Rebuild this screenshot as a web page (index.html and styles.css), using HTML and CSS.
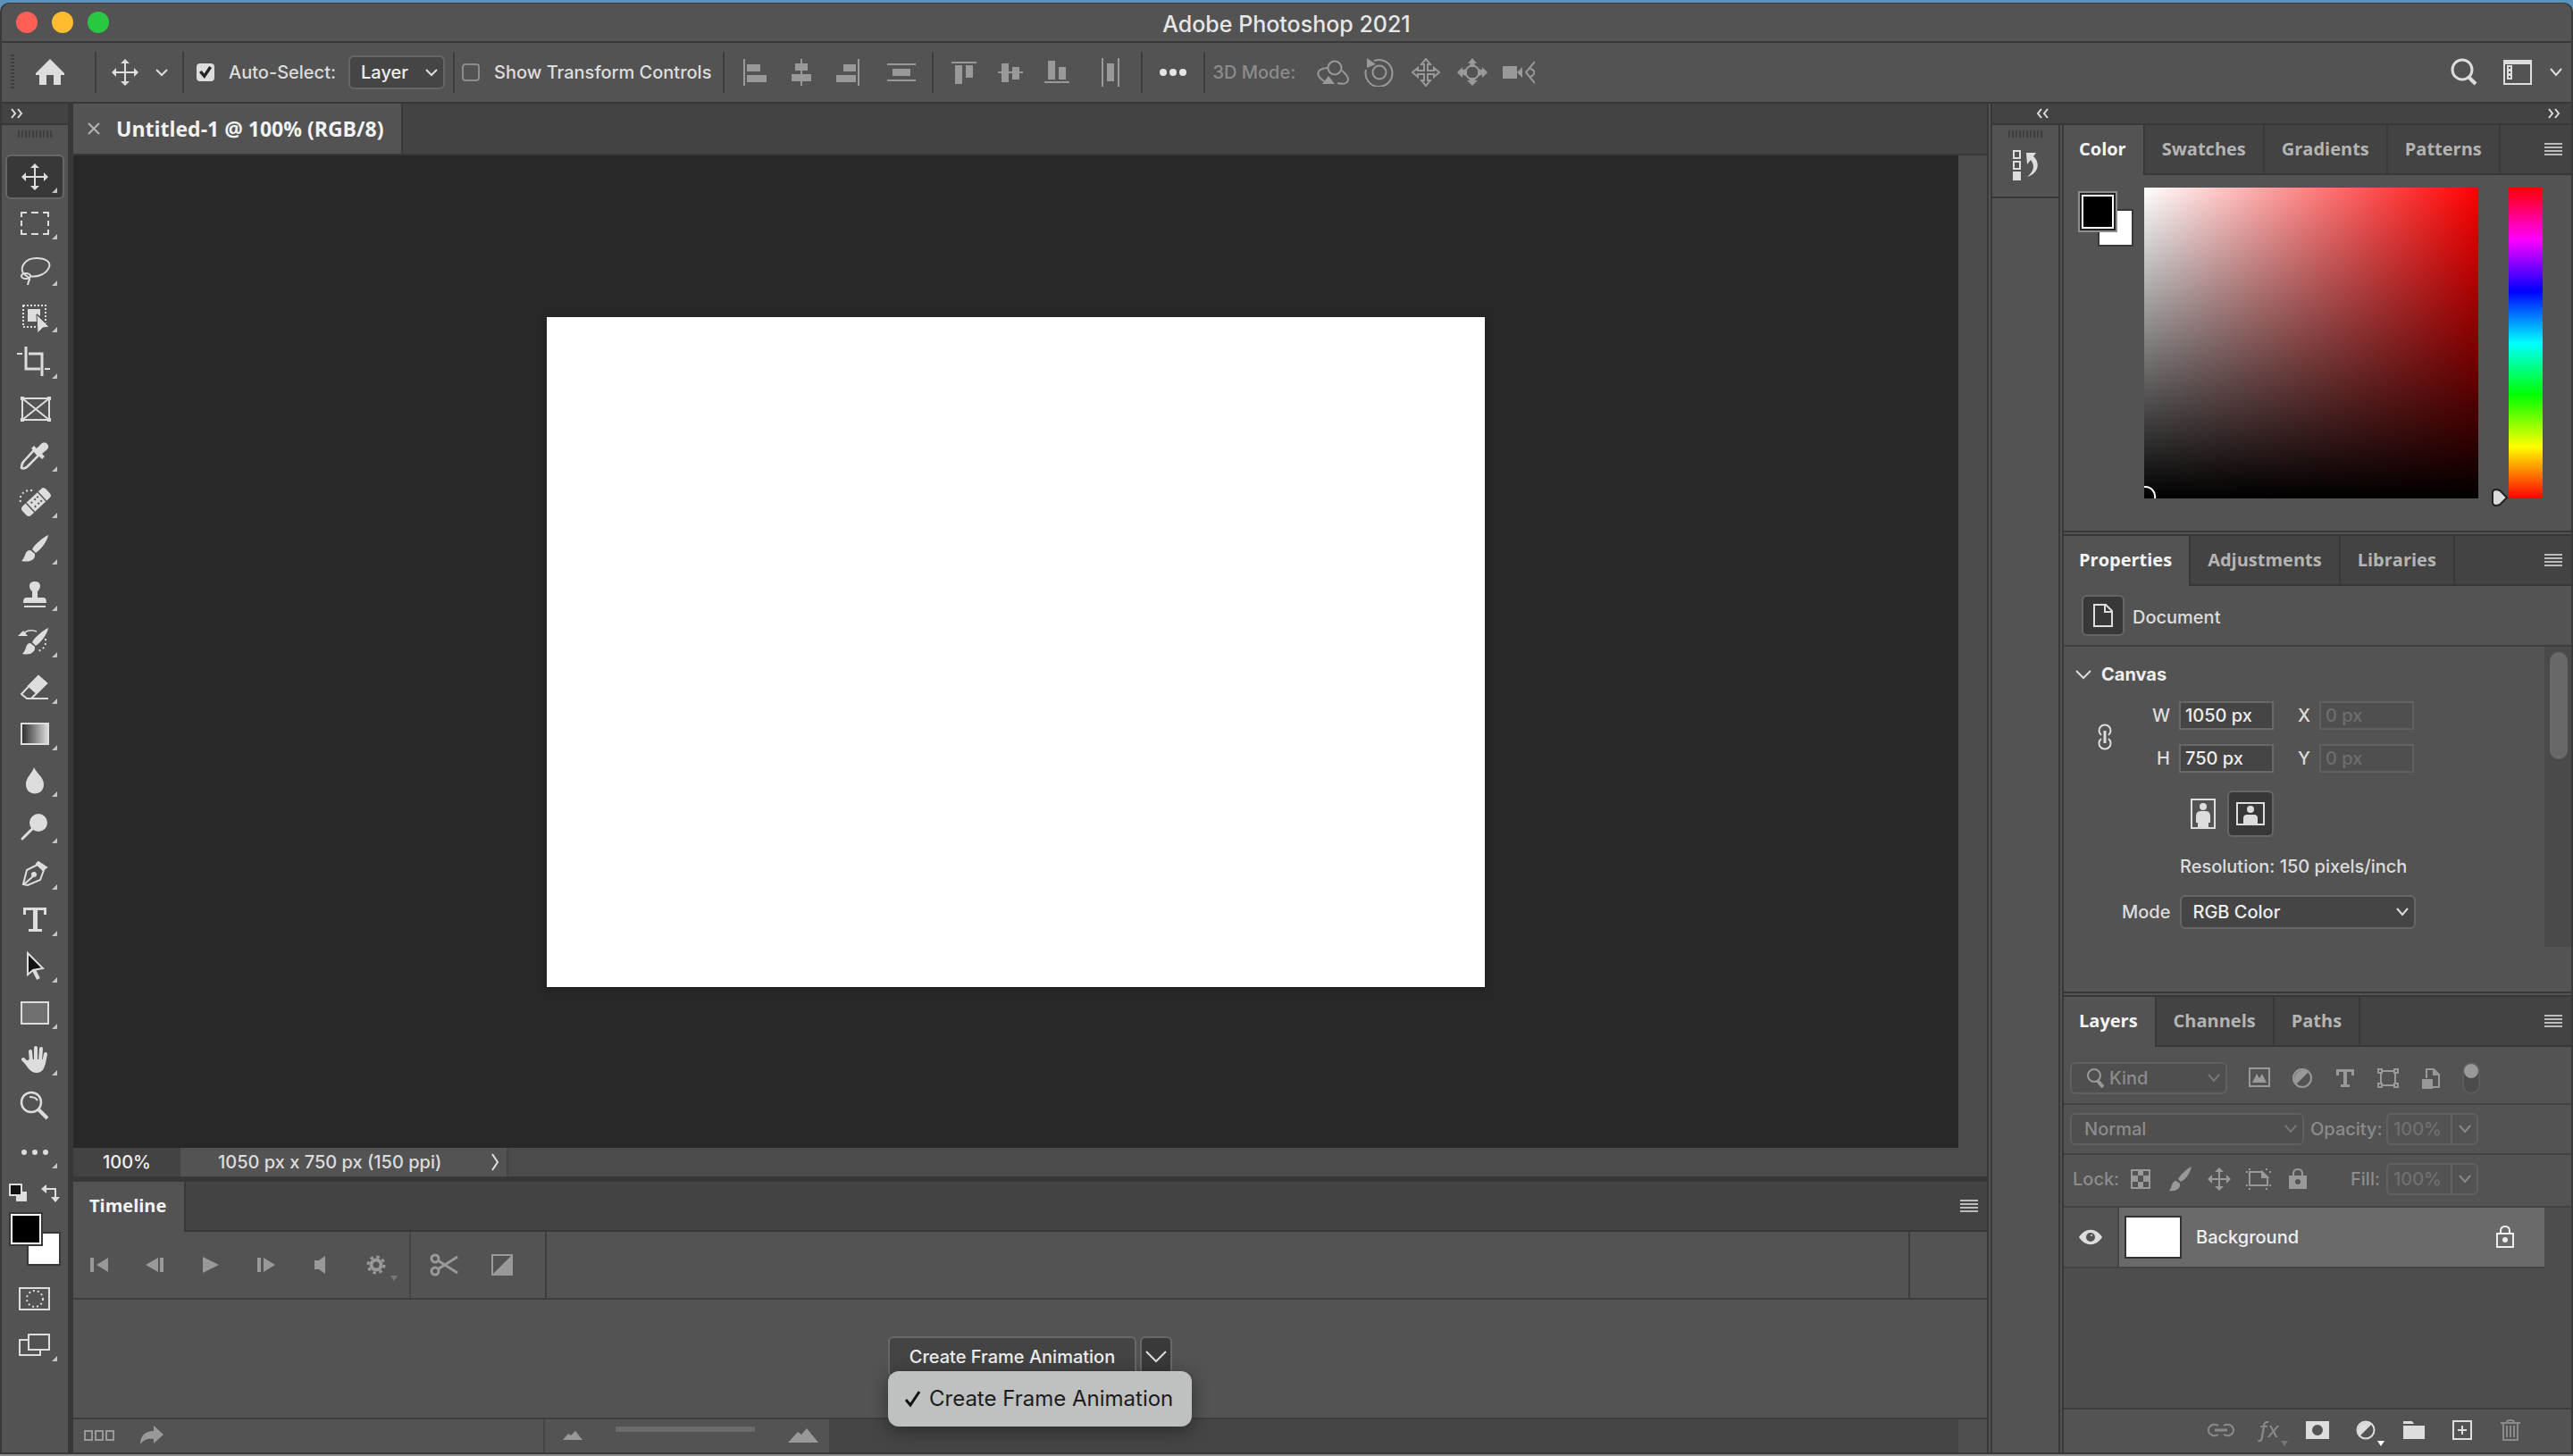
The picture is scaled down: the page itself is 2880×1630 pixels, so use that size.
FILE: index.html
```html
<!DOCTYPE html>
<html lang="en">
<head>
<meta charset="utf-8">
<title>Adobe Photoshop 2021</title>
<link rel="stylesheet" href="styles.css">
</head>
<body>
<div class="app">
  <header class="titlebar">
    <div class="lights"><button class="light red" aria-label="Close"></button><button class="light yellow" aria-label="Minimize"></button><button class="light green" aria-label="Zoom"></button></div>
    <h1 class="app-title">Adobe Photoshop 2021</h1>
  </header>

  <div class="options">
    <span class="grip-v"></span>
    <button class="home" aria-label="Home"><svg width="34" height="32" viewBox="0 0 34 32"><path d="M17 1 33 17V19H29V30H21V19H13V30H5V19H1V17Z" fill="#ddd"/></svg></button>
    <div class="seg seg-tool">
      <button aria-label="Move tool"><svg width="32" height="32" viewBox="-16 -16 32 32"><path d="M0-11V11M-11 0H11" stroke="#ddd" stroke-width="2"/><path d="M0-15 5-10H-5ZM0 15 5 10H-5ZM-15 0-10-5V5ZM15 0 10-5V5Z" fill="#ddd"/></svg></button>
      <button aria-label="Tool presets"><svg width="14" height="10" viewBox="0 0 14 10"><path d="M1 2 7 8 13 2" fill="none" stroke="#ddd" stroke-width="2"/></svg></button>
    </div>
    <div class="seg seg-auto">
      <label class="check"><input type="checkbox" checked>Auto-Select:</label>
      <span class="select select-layer"><select aria-label="Auto-select target"><option>Layer</option></select><svg width="14" height="10" viewBox="0 0 14 10"><path d="M1 2 7 8 13 2" fill="none" stroke="#ddd" stroke-width="2"/></svg></span>
    </div>
    <div class="seg seg-transform">
      <label class="check"><input type="checkbox">Show Transform Controls</label>
    </div>
    <div class="seg seg-align">
      <button aria-label="Align left edges"><svg width="32" height="32" viewBox="-16 -16 32 32"><path d="M-13-15h2v30h-2ZM-9-9H6V-1H-9ZM-9 3H13v8H-9Z" fill="#999"/></svg></button>
      <button aria-label="Align horizontal centers"><svg width="32" height="32" viewBox="-16 -16 32 32"><path d="M-1-15h2v30h-2ZM-7-10H7v8H-7ZM-11 2H11v8H-11Z" fill="#999"/></svg></button>
      <button aria-label="Align right edges"><svg width="32" height="32" viewBox="-16 -16 32 32"><path d="M11-15h2v30h-2ZM-5-9H9V-1H-5ZM-13 3H9v8H-13Z" fill="#999"/></svg></button>
      <button class="last" aria-label="Distribute vertically"><svg width="32" height="32" viewBox="-16 -16 32 32"><path d="M-16-10H16v2H-16ZM-16 8H16v2H-16ZM-10-4H10V4H-10Z" fill="#999"/></svg></button>
    </div>
    <div class="seg seg-align">
      <button aria-label="Align top edges"><svg width="32" height="32" viewBox="-16 -16 32 32"><path d="M-14-12H14v2H-14ZM-10-8H-2V13H-10ZM2-8H10V6H2Z" fill="#999"/></svg></button>
      <button aria-label="Align vertical centers"><svg width="32" height="32" viewBox="-16 -16 32 32"><path d="M-14-1H14V1H-14ZM-10-10H-2V11H-10ZM2-6H10V8H2Z" fill="#999"/></svg></button>
      <button aria-label="Align bottom edges"><svg width="32" height="32" viewBox="-16 -16 32 32"><path d="M-14 10H14v2H-14ZM-10-13H-2V8H-10ZM2-6H10V8H2Z" fill="#999"/></svg></button>
      <button class="last" aria-label="Distribute horizontally"><svg width="32" height="32" viewBox="-16 -16 32 32"><path d="M-10-16h2v32h-2ZM8-16h2v32h-2ZM-4-10H4V10H-4Z" fill="#999"/></svg></button>
    </div>
    <div class="seg seg-more"><button aria-label="More options"><svg width="32" height="10" viewBox="-16 -5 32 10" fill="#e6e6e6"><circle cx="-11" r="4"/><circle r="4"/><circle cx="11" r="4"/></svg></button></div>
    <div class="seg seg-3d">
      <span class="dim">3D Mode:</span>
      <button aria-label="Orbit"><svg width="36" height="32" viewBox="-18 -16 36 32" fill="none" stroke="#999" stroke-width="2"><circle cx="2" cy="-5" r="7.500"/><path d="M-6-5C-20-4-19 4-10 10M10-2C22 8 17 15 5 12"/><path d="M-12 13-5 4 2 13Z" fill="#999" stroke="none"/></svg></button>
      <button aria-label="Roll"><svg width="36" height="32" viewBox="-18 -16 36 32" fill="none" stroke="#999" stroke-width="2"><circle r="7.500"/><path d="M-6-13A15 15 0 1 1-15-3"/><path d="M-14-16V-5L-4-9Z" fill="#999" stroke="none"/></svg></button>
      <button aria-label="Pan"><svg width="36" height="32" viewBox="-18 -16 36 32" fill="none" stroke="#999" stroke-width="2"><path d="M0-15 5-9H2V-2H9V-5L15 0 9 5V2H2V9H5L0 15-5 9H-2V2H-9V5L-15 0-9-5V-2H-2V-9H-5Z"/></svg></button>
      <button aria-label="Slide"><svg width="36" height="32" viewBox="-18 -16 36 32" fill="none" stroke="#999" stroke-width="2"><circle r="7.500"/><path d="M0-16 5-10H2L4-6H-4L-2-10H-5ZM0 15 6 9H3L4 6H-4L-3 9H-6ZM-17 0-11-6V-3L-6-4V4L-11 3V6ZM17 0 11-6V-3L6-4V4L11 3V6Z" fill="#999" stroke="none"/></svg></button>
      <button aria-label="Camera"><svg width="36" height="32" viewBox="-18 -16 36 32" fill="none" stroke="#999" stroke-width="2"><path d="M-18-7H-2V7H-18ZM-2 0 4-6V6Z" fill="#999" stroke="none"/><path d="M18-12 8 0 18 12M13-4C19-2 19 2 13 5"/></svg></button>
    </div>
    <div class="options-end">
      <button aria-label="Search"><svg width="32" height="32" viewBox="0 0 32 32" fill="none" stroke="#ddd"><circle cx="14" cy="13" r="11" stroke-width="3"/><path d="M21 21 29 29" stroke-width="4"/></svg></button>
      <button class="ws" aria-label="Workspace"><svg width="32" height="28" viewBox="0 0 32 28"><path d="M0 0H32V28H0ZM2 5V26H30V5Z" fill="#ddd" fill-rule="evenodd"/><path d="M4 6H10V22H4ZM6 8v2h2V8ZM6 13v2h2v-2ZM6 18v2h2v-2Z" fill="#ddd" fill-rule="evenodd"/></svg></button>
      <button aria-label="Workspace menu"><svg width="14" height="10" viewBox="0 0 14 10"><path d="M1 1 7 8 13 1" fill="none" stroke="#ddd" stroke-width="2"/></svg></button>
    </div>
  </div>

  <div class="workspace">
    <nav class="tools" aria-label="Tools">
      <div class="strip"><button aria-label="Expand tools"><svg width="14" height="12" viewBox="0 0 14 12"><path d="M1 1 5 6 1 11M8 1 12 6 8 11" fill="none" stroke="#ddd" stroke-width="2"/></svg></button></div>
      <span class="grip-h"></span>
      <button class="tool active" aria-label="Move"><svg viewBox="-20 -20 40 40"><path d="M0-11V11M-11 0H11" stroke="#ddd" stroke-width="2"/><path d="M0-15 5-10H-5ZM0 15 5 10H-5ZM-15 0-10-5V5ZM15 0 10-5V5Z" fill="#ddd"/></svg></button>
      <button class="tool" aria-label="Marquee"><svg viewBox="-20 -20 40 40"><path d="M-15-7V-12H-9M-4-12H4M9-12H15V-7M15-3V3M15 7V12H9M4 12H-4M-9 12H-15V7M-15 3V-3" fill="none" stroke="#ddd" stroke-width="2"/></svg></button>
      <button class="tool" aria-label="Lasso"><svg viewBox="-20 -20 40 40" fill="none" stroke="#ddd" stroke-width="2"><path d="M-13 4C-17-3-11-13 2-13 12-13 18-9 16-3 13 5 2 9-6 7"/><ellipse cx="-10" cy="7" rx="5" ry="3"/><path d="M-12 5C-8 8-4 10-7 13L-8 17"/></svg></button>
      <button class="tool" aria-label="Object selection"><svg viewBox="-20 -20 40 40"><rect x="-13" y="-12" width="25" height="24" fill="none" stroke="#ddd" stroke-width="2" stroke-dasharray="2 2"/><path d="M-8-8H6V0L2-3V6H-8Z" fill="#ddd"/><path d="M2-2 16 12 9 13 3 19Z" fill="#ddd" stroke="#535353" stroke-width="1"/></svg></button>
      <button class="tool" aria-label="Crop"><svg viewBox="-20 -20 40 40" fill="none" stroke="#ddd" stroke-width="3"><path d="M-10-18V7H6M-7-10H8V15" /><path d="M-20-10H-14M11 7H17" stroke-width="2"/></svg></button>
      <button class="tool plain" aria-label="Frame"><svg viewBox="-20 -20 40 40"><path d="M-14-12H16V12H-14ZM-14-12 16 12M16-12-14 12" fill="none" stroke="#ddd" stroke-width="2"/><path d="M-16-14h4v4h-4ZM14-14h4v4h-4ZM-16 10h4v4h-4ZM14 10h4v4h-4Z" fill="#ddd"/></svg></button>
      <button class="tool" aria-label="Eyedropper"><svg viewBox="-20 -20 40 40"><path d="M-1-6 4 0-8 12C-11 15-13 15-15 14-15 12-15 9-12 6Z" fill="none" stroke="#ddd" stroke-width="2.500"/><path d="M-4-8-1-11 2-8 7-13C11-17 18-12 14-7L8-2 11 1 8 4Z" fill="#ddd"/></svg></button>
      <button class="tool" aria-label="Healing brush"><svg viewBox="-20 -20 40 40"><path d="M-16 0C-18-8-12-14-2-13" fill="none" stroke="#ddd" stroke-width="2" stroke-dasharray="2 3"/><g transform="rotate(-43)"><rect x="-17" y="-6" width="36" height="14" rx="4" fill="#ddd"/><path d="M-8-6V8M10-6V8" stroke="#535353" stroke-width="1.500"/><path d="M-4-3h2v2h-2ZM1-3h2v2h-2ZM5-3h2v2h-2ZM-4 3h2v2h-2ZM1 3h2v2h-2ZM5 3h2v2h-2Z" fill="#535353"/></g></svg></button>
      <button class="tool" aria-label="Brush"><svg viewBox="-20 -20 40 40" fill="#ddd"><path d="M15-15C10-13-1-4-3 1L1 5C7 1 14-8 15-15ZM-5 2C-12 2-10 10-15 14-6 16 1 13 0 6Z"/></svg></button>
      <button class="tool" aria-label="Clone stamp"><svg viewBox="-20 -20 40 40" fill="#ddd"><path d="M0-15C8-15 7-7 3-4V3H10Q13 3 13 9H-13Q-13 3-10 3H-3V-4C-7-7-8-15 0-15ZM-12 12H12v2H-12Z"/></svg></button>
      <button class="tool" aria-label="History brush"><svg viewBox="-20 -20 40 40" fill="#ddd"><path d="M15-15C10-13-1-4-3 1L1 5C7 1 14-8 15-15ZM-5 2C-11 2-9 10-14 14-5 16 1 12 0 6Z"/><path d="M-19-6-13-12-8-6Z"/><path d="M-13-8C-9-13-4-13 2-11" fill="none" stroke="#ddd" stroke-width="1.500"/><path d="M12-3C13 5 10 9 3 11" fill="none" stroke="#ddd" stroke-width="2" stroke-dasharray="2 3"/></svg></button>
      <button class="tool" aria-label="Eraser"><svg viewBox="-20 -20 40 40" fill="none" stroke="#ddd" stroke-width="2"><path d="M4-13 13-5-4 12H-9L-15 7Z"/><path d="M4-13 13-5 2 6-7-2Z" fill="#ddd"/><path d="M-8 12H15"/></svg></button>
      <button class="tool" aria-label="Gradient"><svg viewBox="-20 -20 40 40"><defs><linearGradient id="grad"><stop stop-color="#2b2b2b"/><stop offset="1" stop-color="#ddd"/></linearGradient></defs><rect x="-15" y="-12" width="30" height="23" fill="url(#grad)" stroke="#ddd" stroke-width="2"/></svg></button>
      <button class="tool" aria-label="Blur"><svg viewBox="-20 -20 40 40"><path d="M-1-15C2-8 10-4 10 4 10 18-10 18-10 4-10-4-3-8-1-15Z" fill="#ddd"/></svg></button>
      <button class="tool" aria-label="Dodge"><svg viewBox="-20 -20 40 40"><circle cx="4" cy="-5" r="10" fill="#ddd"/><path d="M-3 2-14 13" stroke="#ddd" stroke-width="3" stroke-linecap="round"/></svg></button>
      <button class="tool" aria-label="Pen"><svg viewBox="-20 -20 40 40" fill="none" stroke="#ddd" stroke-width="2"><path d="M-13 12-9-4 3-10 10-4 6 7-8 13ZM-12 12-2 3"/><circle cx="-1" cy="1" r="2" fill="#ddd"/><path d="M4-13 13-7 9-4 2-11Z" fill="#ddd"/></svg></button>
      <button class="tool" aria-label="Type"><svg viewBox="-20 -20 40 40"><path d="M-13-14H13V-6H10V-11H3V10H8V13H-7V10H-2V-11H-10V-6H-13Z" fill="#ddd"/></svg></button>
      <button class="tool" aria-label="Path selection"><svg viewBox="-20 -20 40 40"><path d="M-8-15V9L-2 4 9 2Z" fill="#111" stroke="#ddd" stroke-width="2"/><path d="M-1 4 4 14" stroke="#ddd" stroke-width="4"/></svg></button>
      <button class="tool" aria-label="Rectangle"><svg viewBox="-20 -20 40 40"><rect x="-15" y="-12" width="30" height="24" fill="#707070" stroke="#ddd" stroke-width="2"/></svg></button>
      <button class="tool" aria-label="Hand"><svg viewBox="-20 -20 40 40"><g stroke="#ddd" stroke-width="4" stroke-linecap="round"><path d="M-4 2-5-9M1 1V-13M6 2 7-12M10 4 12-6M-13 0-5 8"/></g><path d="M-6 0H12C12 10 8 15 2 15-5 15-8 9-12 3Z" fill="#ddd"/></svg></button>
      <button class="tool plain" aria-label="Zoom"><svg viewBox="-20 -20 40 40" fill="none" stroke="#ddd"><circle cx="-4" cy="-4" r="11" stroke-width="2.500"/><path d="M4 4 14 14" stroke-width="4"/><path d="M-6-10Q1-10 3-6" stroke-width="2"/></svg></button>
      <button class="tool" aria-label="Edit toolbar"><svg viewBox="-20 -20 40 40" fill="#ddd"><circle cx="-12" r="3"/><circle r="3"/><circle cx="12" r="3"/></svg></button>
      <div class="color-mini">
        <button aria-label="Default colors"><svg width="22" height="22" viewBox="0 0 22 22"><path d="M8 9H20V20H8Z" fill="#ddd"/><rect x="1" y="1" width="13" height="12" fill="#111" stroke="#ddd" stroke-width="2"/></svg></button>
        <button aria-label="Swap colors"><svg width="22" height="22" viewBox="0 0 22 22"><path d="M0 6 6 1V11ZM11 15H21L16 21Z" fill="#ddd"/><path d="M5 6H16V16" fill="none" stroke="#ddd" stroke-width="2"/></svg></button>
      </div>
      <div class="swatches"><button class="sw back" aria-label="Background color"></button><button class="sw fore" aria-label="Foreground color"></button></div>
      <button class="tool plain" aria-label="Quick mask"><svg viewBox="-20 -20 40 40" fill="none" stroke="#ddd" stroke-width="2"><rect x="-17" y="-12" width="33" height="24"/><circle r="9" stroke-dasharray="2 3"/></svg></button>
      <button class="tool" aria-label="Screen mode"><svg viewBox="-20 -20 40 40" fill="#535353" stroke="#ddd" stroke-width="2"><rect x="-17" y="-6" width="23" height="17"/><rect x="-7" y="-12" width="23" height="17"/></svg></button>
    </nav>

    <main class="center">
      <div class="doc-tabs"><div class="doc-tab"><button aria-label="Close document"><svg width="14" height="14" viewBox="0 0 14 14"><path d="M1 1 13 13M13 1 1 13" stroke="#b4b4b4" stroke-width="2"/></svg></button><span>Untitled-1 @ 100% (RGB/8)</span></div></div>
      <div class="doc-view"><div class="stage"><div class="canvas"></div></div><div class="vscroll"></div></div>
      <div class="status"><span class="zoom">100%</span><span class="info">1050 px x 750 px (150 ppi)<button aria-label="Status menu"><svg width="10" height="20" viewBox="0 0 10 20"><path d="M2 1 8 10 2 19" fill="none" stroke="#e0e0e0" stroke-width="2"/></svg></button></span></div>
      <section class="timeline">
        <div class="tabs"><button class="tab on">Timeline</button><button class="menu" aria-label="Panel menu"><i></i></button></div>
        <div class="tl-controls">
          <div class="tl-play">
            <button aria-label="First frame"><svg width="24" height="20" viewBox="-12 -10 24 20"><path d="M-10-8h4V8h-4ZM10-8V8L-3 0Z" fill="#999"/></svg></button>
            <button aria-label="Previous frame"><svg width="24" height="20" viewBox="-12 -10 24 20"><path d="M10-8H6V8h4ZM4-8V8L-10 0Z" fill="#999"/></svg></button>
            <button aria-label="Play"><svg width="24" height="20" viewBox="-12 -10 24 20"><path d="M-8-9 10 0-8 9Z" fill="#999"/></svg></button>
            <button aria-label="Next frame"><svg width="24" height="20" viewBox="-12 -10 24 20"><path d="M-9-8h4V8h-4ZM-2-8V8L11 0Z" fill="#999"/></svg></button>
            <button aria-label="Audio"><svg width="24" height="20" viewBox="-12 -10 24 20"><path d="M-7-5H-2L5-10V10L-2 5H-7Z" fill="#999"/></svg></button>
            <button class="gear" aria-label="Playback options"><svg width="24" height="24" viewBox="-12 -12 24 24" fill="none" stroke="#999"><circle r="5.500" stroke-width="4"/><circle r="9" stroke-width="3" stroke-dasharray="3.500 3.568"/></svg></button>
          </div>
          <div class="tl-edit">
            <button aria-label="Split at playhead"><svg width="32" height="26" viewBox="-16 -13 32 26" fill="none" stroke="#999" stroke-width="3"><circle cx="-10" cy="-7" r="4"/><circle cx="-10" cy="7" r="4"/><path d="M-7-5 15 9M-7 5 15-9"/></svg></button>
            <button aria-label="Transition"><svg width="26" height="26" viewBox="-13 -13 26 26"><rect x="-11" y="-11" width="22" height="22" fill="none" stroke="#999" stroke-width="2"/><path d="M12-12V12H-12Z" fill="#999"/></svg></button>
          </div>
          <div class="tl-ruler"></div>
          <div class="tl-pad"></div>
        </div>
        <div class="tl-body">
          <div class="create">
            <button class="create-main">Create Frame Animation</button><button class="create-more" aria-label="Choose animation type"><svg width="26" height="16" viewBox="0 0 26 16"><path d="M2 2 13 13 24 2" fill="none" stroke="#ddd" stroke-width="2"/></svg></button>
            <ul class="popup" role="menu"><li role="menuitem"><svg width="20" height="20" viewBox="0 0 20 20"><path d="M2 11 7 17 17 2" fill="none" stroke="#111" stroke-width="3"/></svg>Create Frame Animation</li></ul>
          </div>
        </div>
        <div class="tl-foot">
          <div class="foot-left">
            <button aria-label="Convert to frames"><svg width="34" height="14" viewBox="0 0 34 14" fill="none" stroke="#999" stroke-width="2"><path d="M1 2H9V12H1ZM13 2H21V12H13ZM25 2H33V12H25Z"/></svg></button>
            <button aria-label="Render video"><svg width="28" height="22" viewBox="0 0 28 22"><path d="M16 0 27 10 16 20V15C8 14 4 17 1 21 1 11 7 6 16 6Z" fill="#999"/></svg></button>
          </div>
          <div class="foot-zoom">
            <svg width="22" height="10" viewBox="0 0 22 10"><path d="M0 10 6 3 9 5 14 0 22 10Z" fill="#999"/></svg>
            <span class="slider"></span>
            <svg width="34" height="16" viewBox="0 0 34 16"><path d="M0 16 11 4 15 7 21 0 34 16Z" fill="#999"/></svg>
          </div>
          <div class="foot-scroll"></div>
        </div>
      </section>
    </main>

    <aside class="dock">
      <div class="strip strip-dock"><button aria-label="Expand panels"><svg width="14" height="12" viewBox="0 0 14 12"><path d="M6 1 2 6 6 11M13 1 9 6 13 11" fill="none" stroke="#ddd" stroke-width="2"/></svg></button><button aria-label="Collapse panels"><svg width="14" height="12" viewBox="0 0 14 12"><path d="M1 1 5 6 1 11M8 1 12 6 8 11" fill="none" stroke="#ddd" stroke-width="2"/></svg></button></div>
      <div class="dock-body">
      <div class="iconcol">
        <div class="icongroup"><span class="grip-h"></span><button aria-label="History"><svg width="30" height="36" viewBox="0 0 30 36"><path d="M2 2H9V10H2ZM2 14H9V22H2Z" fill="none" stroke="#ddd" stroke-width="2"/><path d="M1 25H10V35H1ZM16 4H27L24 8C32 15 30 27 17 31 26 24 25 17 21 12L17 17Z" fill="#ddd"/></svg></button></div>
      </div>
      <div class="panels">
        <section class="panel color">
          <div class="tabs"><button class="tab on">Color</button><button class="tab">Swatches</button><button class="tab">Gradients</button><button class="tab">Patterns</button><button class="menu" aria-label="Panel menu"><i></i></button></div>
          <div class="color-body">
            <div class="picks"><button class="pick white" aria-label="Background color"></button><button class="pick black" aria-label="Foreground color"></button></div>
            <div class="field"><svg width="16" height="16" viewBox="0 0 16 16"><path d="M0 3A11 11 0 0 1 12 16" fill="none" stroke="#fff" stroke-width="2"/></svg></div>
            <div class="hue"><svg width="20" height="22" viewBox="0 0 20 22"><path d="M6 2Q2 2 2 6V16Q2 20 6 20L10 19 18 11 10 3Z" fill="#ddd" stroke="#222" stroke-width="2"/></svg></div>
          </div>
        </section>
        <section class="panel props">
          <div class="tabs"><button class="tab on">Properties</button><button class="tab">Adjustments</button><button class="tab">Libraries</button><button class="menu" aria-label="Panel menu"><i></i></button></div>
          <div class="doc-row"><span class="doc-icon"><svg width="24" height="28" viewBox="0 0 24 28"><path d="M2 2H15L22 9V26H2ZM14 2V10H22" fill="none" stroke="#ddd" stroke-width="2"/></svg></span><span class="doc-name">Document</span></div>
          <div class="props-body">
            <div class="props-main">
              <h2><svg width="18" height="12" viewBox="0 0 18 12"><path d="M1 2 9 10 17 2" fill="none" stroke="#ddd" stroke-width="2"/></svg>Canvas</h2>
              <div class="dims">
                <button class="chain" aria-label="Link dimensions"><svg width="18" height="30" viewBox="0 0 18 30" fill="none" stroke="#ddd" stroke-width="2"><path d="M5 13A6.500 6.500 0 1 1 13 13M5 17A6.500 6.500 0 1 0 13 17"/><path d="M9 8V22" stroke-width="3"/></svg></button>
                <label for="w">W</label><input id="w" value="1050 px"><label for="x">X</label><input id="x" value="0 px" disabled>
                <label for="h">H</label><input id="h" value="750 px"><label for="y">Y</label><input id="y" value="0 px" disabled>
              </div>
              <div class="orient">
                <button aria-label="Portrait"><svg width="28" height="34" viewBox="0 0 28 34"><rect x="1" y="1" width="26" height="32" fill="none" stroke="#ddd" stroke-width="2"/><circle cx="14" cy="9" r="4" fill="#ddd"/><path d="M6 20Q6 14 11 14H17Q22 14 22 20V27H20V33H8V27H6Z" fill="#ddd"/></svg></button>
                <button class="sel" aria-label="Landscape"><svg width="32" height="26" viewBox="0 0 32 26"><rect x="1" y="1" width="30" height="24" fill="none" stroke="#ddd" stroke-width="2"/><circle cx="16" cy="8" r="4" fill="#ddd"/><path d="M8 25V18Q8 14 12 14H20Q24 14 24 18V25Z" fill="#ddd"/></svg></button>
              </div>
              <p class="res">Resolution: 150 pixels/inch</p>
              <div class="mode"><label for="mode">Mode</label><span class="select"><select id="mode"><option>RGB Color</option></select><svg width="14" height="10" viewBox="0 0 14 10"><path d="M1 1 7 8 13 1" fill="none" stroke="#ddd" stroke-width="2"/></svg></span></div>
            </div>
            <div class="pscroll"><span></span></div>
          </div>
        </section>
        <section class="panel layers">
          <div class="tabs"><button class="tab on">Layers</button><button class="tab">Channels</button><button class="tab">Paths</button><button class="menu" aria-label="Panel menu"><i></i></button></div>
          <div class="lrow filter">
            <span class="select off kind"><svg class="lead" width="22" height="24" viewBox="0 0 22 24" fill="none" stroke="#999"><circle cx="9" cy="9" r="7" stroke-width="2"/><path d="M13 15 19 22" stroke-width="4"/></svg><select disabled aria-label="Filter kind"><option>Kind</option></select><svg width="14" height="10" viewBox="0 0 14 10"><path d="M1 1 7 8 13 1" fill="none" stroke="#777" stroke-width="2"/></svg></span>
            <div class="ficons">
            <svg width="24" height="22" viewBox="0 0 24 22"><rect x="1" y="1" width="22" height="20" fill="none" stroke="#999" stroke-width="2"/><path d="M4 17 9 7 12 12 15 7 20 17Z" fill="#999"/></svg>
            <svg width="24" height="24" viewBox="0 0 24 24"><circle cx="12" cy="12" r="10" fill="#535353" stroke="#999" stroke-width="2"/><path d="M19 5A10 10 0 0 0 5 19Z" fill="#999"/></svg>
            <svg width="24" height="24" viewBox="0 0 24 24"><path d="M2 2H22V9H19V5H14V19H17V22H7V19H10V5H5V9H2Z" fill="#999"/></svg>
            <svg width="24" height="24" viewBox="0 0 24 24" fill="none" stroke="#999" stroke-width="2"><path d="M5 4H19M5 20H19M4 6V18M20 6V18"/><path d="M1 2H5V6H1ZM19 2H23V6H19ZM1 18H5V22H1ZM19 18H23V22H19Z" fill="#535353"/></svg>
            <svg width="24" height="24" viewBox="0 0 24 24"><path d="M7 12V2H15L21 8V22H14" fill="none" stroke="#999" stroke-width="2"/><path d="M2 13H14V24H2ZM14 2V9H21Z" fill="#999"/></svg>
            </div>
            <button class="toggle" aria-label="Toggle filtering"><i></i></button>
          </div>
          <div class="lrow blend">
            <span class="select off"><select disabled aria-label="Blend mode"><option>Normal</option></select><svg width="14" height="10" viewBox="0 0 14 10"><path d="M1 1 7 8 13 1" fill="none" stroke="#777" stroke-width="2"/></svg></span>
            <label class="dim" for="op">Opacity:</label>
            <span class="combo"><input id="op" value="100%" disabled><button aria-label="Opacity slider"><svg width="14" height="10" viewBox="0 0 14 10"><path d="M1 1 7 8 13 1" fill="none" stroke="#888" stroke-width="2"/></svg></button></span>
          </div>
          <div class="lrow lock">
            <span class="dim">Lock:</span>
            <div class="lock-icons">
              <svg width="28" height="28" viewBox="-14 -14 28 28"><path d="M-11-11H11V11H-11ZM-9-9V-4H-3V-9ZM3-9V-4H9V-9ZM-3-4V3H3V-4ZM-9 3V9H-3V3ZM3 3V9H9V3Z" fill="#999" fill-rule="evenodd"/></svg>
              <svg width="28" height="28" viewBox="-14 -14 28 28" fill="#999"><path d="M13-14C8-12 0-4-2 0L1 3C7 0 12-8 13-14ZM-4 2C-10 2-8 9-12 13-5 14 1 11 0 5Z"/></svg>
              <svg width="28" height="28" viewBox="-14 -14 28 28" fill="#999"><path d="M0-13 5-8H1V-1H8V-5L13 0 8 5V1H1V8H5L0 13-5 8H-1V1H-8V5L-13 0-8-5V-1H-1V-8H-5Z"/></svg>
              <svg width="28" height="28" viewBox="-14 -14 28 28" fill="none" stroke="#999" stroke-width="2"><path d="M-10-8H4L10-2V7H-10Z"/><path d="M4-8V-2H10Z" fill="#999"/><path d="M-14-8h2M-10-12v2M9-12v2M12-8h2M-14 7h2M12 7h2M-10 10v2M9 10v2"/></svg>
              <svg width="28" height="28" viewBox="-14 -14 28 28"><path d="M-10-4H10V11H-10Z" fill="#999"/><path d="M-5-3V-6Q-5-11 0-11T5-6V-3" fill="none" stroke="#999" stroke-width="2"/><circle cy="3" r="3" fill="#535353"/></svg>
            </div>
            <label class="dim" for="fill">Fill:</label>
            <span class="combo"><input id="fill" value="100%" disabled><button aria-label="Fill slider"><svg width="14" height="10" viewBox="0 0 14 10"><path d="M1 1 7 8 13 1" fill="none" stroke="#888" stroke-width="2"/></svg></button></span>
          </div>
          <div class="list">
            <div class="layer">
              <button class="eye" aria-label="Visibility"><svg width="26" height="18" viewBox="0 0 26 18"><path d="M0 9C7-2 19-2 26 9 19 20 7 20 0 9Z" fill="#ddd"/><circle cx="13" cy="9" r="5" fill="#535353"/><circle cx="14" cy="7" r="1" fill="#ddd"/></svg></button>
              <div class="layer-main"><span class="thumb"></span><span class="lname">Background</span><svg width="22" height="26" viewBox="0 0 22 26"><path d="M2 9H20V24H2Z" fill="none" stroke="#eee" stroke-width="2"/><path d="M6 9V6Q6 1 11 1T16 6V9" fill="none" stroke="#eee" stroke-width="2"/><circle cx="11" cy="16" r="3" fill="#eee"/></svg></div>
            </div>
          </div>
          <div class="lfoot">
            <button aria-label="Link layers"><svg width="30" height="24" viewBox="-15 -12 30 24" fill="none" stroke="#8a8a8a" stroke-width="2"><path d="M-3-5C-8-8-14-5-14 0S-8 8-3 5M3-5C8-8 14-5 14 0S8 8 3 5"/><path d="M-7 0H7" stroke-width="3"/></svg></button>
            <button class="fx" aria-label="Layer style">fx</button>
            <button aria-label="Add mask"><svg width="30" height="24" viewBox="-15 -12 30 24"><path d="M-13-10H13V10H-13ZM0-6A6 6 0 0 0 0 6 6 6 0 0 0 0-6Z" fill="#ddd" fill-rule="evenodd"/></svg></button>
            <button class="more" aria-label="Adjustment layer"><svg width="30" height="24" viewBox="-15 -12 30 24"><circle r="9.500" fill="none" stroke="#ddd" stroke-width="2"/><path d="M7-7A10 10 0 0 0-7 7Z" fill="#ddd"/></svg></button>
            <button aria-label="New group"><svg width="30" height="24" viewBox="-15 -12 30 24"><path d="M-12-10H-2L0-7H-12ZM-12-5H12V10H-12Z" fill="#ddd"/></svg></button>
            <button aria-label="New layer"><svg width="30" height="24" viewBox="-15 -12 30 24" fill="none" stroke="#ddd" stroke-width="2"><rect x="-10" y="-10" width="20" height="20"/><path d="M0-5V5M-5 0H5"/></svg></button>
            <button aria-label="Delete layer"><svg width="30" height="24" viewBox="-15 -12 30 24" fill="none" stroke="#8a8a8a" stroke-width="2"><path d="M-11-8H11M-8-8V11H8V-8M-4-9Q-4-11 0-11T4-9M-4-5V8M0-5V8M4-5V8"/></svg></button>
          </div>
        </section>
      </div>
      </div>
    </aside>
  </div>
</div>
</body>
</html>
```
FILE: styles.css
```css
*{box-sizing:border-box}
body{margin:0;background:linear-gradient(#5b93bb 0 50%,#8e8c8c 50%);font:500 20px/24px Inter,"Liberation Sans",sans-serif;color:#ddd}
button{margin:0;padding:0;border:0;background:none;color:inherit;font:inherit;display:flex;align-items:center;justify-content:center}
svg{display:block;flex:none}
h1,h2,p,ul{margin:0;padding:0;list-style:none}
input,select{font:inherit;color:inherit;margin:0}
.app{height:calc(100vh - 5px);margin:3px 0 2px;border:2px solid #383838;border-top-width:1px;border-radius:10px 10px 0 0;background:#535353;display:flex;flex-direction:column;overflow:hidden}

.titlebar{height:42px;display:grid;grid-template-columns:1fr auto 1fr;align-items:center;flex:none}
.lights{display:flex;gap:16px;padding-left:16px}
.light{width:24px;height:24px;border-radius:50%}
.red{background:#ff5f57}
.yellow{background:#febc2e}
.green{background:#28c840}
.app-title{font-size:25px;line-height:32px;font-weight:500;color:#e6e6e6;grid-column:2;padding-top:4px}

.options{height:70px;border:solid #383838;border-width:2px 0;display:flex;align-items:center;padding-left:10px;flex:none}
.grip-v{width:4px;height:40px;background:repeating-linear-gradient(#3e3e3e 0 2px,transparent 2px 4px)}
.home{width:80px}
.seg{height:46px;border-left:2px solid #3d3d3d;display:flex;align-items:center}
.seg-tool{margin-left:10px;padding:0 16px;gap:18px}
.check{display:flex;align-items:center;gap:16px}
.check input{appearance:none;width:20px;height:20px;border:2px solid #8c8c8c;border-radius:4px;display:grid;place-items:center}
.check input:checked{background:#ddd;border-color:#ddd}
.check input:checked::before{content:"";width:14px;height:14px;background:#222;clip-path:polygon(0 50%,18% 36%,40% 60%,80% 0,100% 14%,42% 100%)}
.seg-auto{padding:0 9px 0 14px;gap:14px}
.seg-transform{padding:0 13px 0 8px}
.select{position:relative;display:flex;align-items:center}
.select select{appearance:none;width:100%;height:38px;border:2px solid #666;border-radius:6px;background:#454545;padding:0 12px;color:#eee;opacity:1}
.select svg{position:absolute;right:8px;pointer-events:none}
.select-layer{width:108px}
.seg-align{padding:0 18px;gap:20px}
.seg-align .last{margin-left:8px}
.seg-more{width:70px;justify-content:center}
.seg-3d{padding-left:8px;gap:16px}
.dim{color:#8c8c8c}
.seg-3d .dim{margin-right:8px}
.options-end{margin-left:auto;display:flex;align-items:center;gap:24px;padding-right:10px}
.options-end .ws{padding-left:4px;margin-right:-4px}

.workspace{flex:1;min-height:0;display:flex}
.strip{height:24px;background:#434343;border-bottom:2px solid #383838;display:flex;align-items:center}
.grip-h{width:38px;height:8px;background:repeating-linear-gradient(90deg,#3f3f3f 0 2px,transparent 2px 4px)}
.tools{width:74px;display:flex;flex-direction:column;align-items:center;gap:2px;flex:none}
.tools .strip{width:100%;padding-left:10px}
.tools .grip-h{margin:4px 0 17px}
.tool{width:66px;height:50px;border-radius:6px;position:relative;border:2px solid transparent;flex:none}
.tool svg{width:40px;height:40px}
.tool.active{background:#383838;border-color:#666}
.tool::after{content:"";position:absolute;right:6px;bottom:5px;border:solid transparent;border-width:0 0 6px 6px;border-bottom-color:#c4c4c4}
.tool.plain::after{display:none}
.color-mini{width:58px;display:flex;justify-content:space-between;margin-top:8px}
.swatches{width:58px;height:60px;position:relative;margin:8px 0 10px}
.sw{position:absolute;width:38px;height:38px;border:2px solid #383838}
.fore{left:0;top:0;background:#000;box-shadow:inset 0 0 0 2px #fff}
.back{right:0;bottom:0;background:#fff}

.center{flex:1;min-width:0;display:flex;flex-direction:column;border:solid #383838;border-width:0 2px;box-shadow:-4px 0 0 #383838;margin-left:4px}
.doc-tabs{height:58px;background:#434343;border-bottom:2px solid #383838;display:flex;flex:none}
.doc-tab{background:#535353;border-right:2px solid #383838;padding:0 20px 0 16px;display:flex;align-items:center;gap:18px;font:700 23px/28px "Open Sans","Noto Sans",sans-serif;color:#f2f2f2}
.doc-view{flex:1;min-height:0;display:flex}
.stage{flex:1;background:#282828;display:flex;align-items:center;justify-content:center}
.canvas{width:1050px;height:750px;background:#fff;box-shadow:0 2px 6px #1c1c1c}
.vscroll{width:32px;background:#4b4b4b}
.status{height:32px;background:#4b4b4b;display:flex;flex:none}
.status span{display:flex;align-items:center}
.zoom{width:120px;background:#434343;justify-content:center;color:#f0f0f0}
.info{width:367px;background:#535353;border-right:2px solid #434343;padding:0 8px 0 42px;justify-content:space-between}
.timeline{border-top:6px solid #383838;display:flex;flex-direction:column;flex:none}
.tabs{height:56px;background:#434343;display:flex;flex:none;box-shadow:inset 0 -2px #383838}
.tab{padding:0 19px 2px;border-right:2px solid #383838;font:700 20px/28px "Open Sans","Noto Sans",sans-serif;color:#b4b4b4}
.tab.on{background:#535353;color:#f4f4f4;padding-left:17px}
.timeline .tab.on{padding:0 20px 2px 18px}
.menu{margin-left:auto;padding:0 10px 2px 0}
.menu i{width:20px;height:14px;background:repeating-linear-gradient(#bbb 0 2px,transparent 2px 4px)}
.tl-controls{height:76px;border-bottom:2px solid #3d3d3d;display:flex}
.tl-play{display:flex;align-items:center;gap:38px;padding-left:17px;width:378px;box-shadow:inset -2px 0 #434343}
.gear{position:relative}
.gear::after,.more::after,.fx::after{content:"";position:absolute;right:-12px;bottom:-6px;border:solid transparent;border-width:6px 4px 0;border-top-color:#777}
.tl-edit{display:flex;align-items:center;gap:36px;padding-left:21px;width:152px;border-right:2px solid #3d3d3d}
.tl-ruler{flex:1;border-right:2px solid #3d3d3d}
.tl-pad{width:86px}
.tl-body{height:132px;display:flex;justify-content:center;align-items:flex-start;padding-top:41px}
.create{position:relative;display:flex;gap:4px}
.create-main,.create-more{height:46px;border:2px solid #686868;border-radius:6px;background:#444;color:#eee}
.create-main{width:278px}
.create-more{width:36px;background:#393939}
.popup{position:absolute;left:0;top:39px;width:340px;height:62px;border-radius:12px;background:#bfc1c1;box-shadow:0 4px 20px #0006;display:flex;align-items:center;padding-left:18px;color:#1c1c1c;font-size:24px;line-height:28px;font-weight:400;z-index:1}
.popup li{display:flex;align-items:center;gap:8px;white-space:nowrap}
.tl-foot{height:39px;border-top:2px solid #3d3d3d;display:flex}
.foot-left{width:528px;border-right:2px solid #454545;display:flex;align-items:center;gap:28px;padding:0 0 2px 12px}
.foot-zoom{width:318px;display:flex;align-items:center;justify-content:space-between;padding:0 12px 2px 20px}
.slider{width:156px;height:6px;background:#6b6b6b;margin-bottom:14px}
.foot-scroll{flex:1;background:#454545;border-right:32px solid #4f4f4f}

.dock{width:648px;margin-left:4px;box-shadow:-2px 0 #383838;flex:none;display:flex;flex-direction:column}
.strip-dock{justify-content:space-between;padding:0 12px 0 49px;flex:none}
.dock-body{flex:1;min-height:0;display:flex}
.iconcol{width:76px;border-right:2px solid #383838;flex:none}
.icongroup{height:82px;border-bottom:2px solid #383838;display:flex;flex-direction:column;align-items:center;padding-top:6px;gap:13px}
.panels{flex:1;margin-left:2px;border-left:2px solid #383838;display:flex;flex-direction:column;min-width:0}
.panel{display:flex;flex-direction:column;flex:none}
.color,.props{border-bottom:6px double #383838}
.color{height:460px}
.color-body{display:flex;padding:14px 32px 0 16px}
.picks{width:62px;height:62px;position:relative;margin:4px 12px 0 0}
.pick{position:absolute;border:2px solid #383838}
.white{width:40px;height:42px;right:0;bottom:0;background:#fff}
.black{width:40px;height:42px;left:2px;top:2px;background:#000;border-color:#222;outline:2px solid #8e8e8e;box-shadow:inset 0 0 0 2px #fff}
.field{flex:1;height:348px;background:linear-gradient(transparent,#000),linear-gradient(90deg,#fff,#f00);display:flex;align-items:flex-end}
.hue{width:38px;margin-left:34px;position:relative;background:linear-gradient(#f00,#f0f,#00f,#0ff,#0f0,#ff0,#f00)}
.hue svg{position:absolute;right:100%;bottom:-10px}
.props{height:516px}
.doc-row{height:68px;border-bottom:2px solid #3f3f3f;display:flex;align-items:center;padding:0 20px;gap:9px}
.doc-icon{width:48px;height:46px;border:2px solid #666;border-radius:6px;background:#383838;display:grid;place-items:center}
.doc-name{padding-top:4px}
.props-body{display:flex;height:336px}
.props-main{flex:1}
.props h2{display:flex;align-items:center;gap:11px;font-size:20px;line-height:24px;font-weight:700;color:#eee;padding:19px 0 0 13px}
.dims{display:grid;grid-template-columns:72px 47px 106px 51px 106px;grid-template-rows:32px 32px;row-gap:16px;align-items:center;padding:18px 0 0 10px}
.chain{grid-row:1/3}
.dims label{text-align:right;padding-right:10px}
.dims input{width:106px;height:32px;border:2px solid #686868;background:#454545;padding:0 5px;color:#eee}
.dims input:disabled{background:#4f4f4f;border-color:#606060;color:#6e6e6e}
.orient{display:flex;align-items:center;gap:13px;padding:20px 0 0 142px}
.orient .sel{width:52px;height:52px;border:2px solid #666;border-radius:6px;background:#383838}
.res{padding:21px 0 0 130px}
.mode{display:flex;align-items:center;gap:11px;padding:20px 0 0 65px}
.mode .select{width:264px}
.pscroll{width:30px;background:#4a4a4a;padding:6px}
.pscroll span{display:block;width:20px;height:120px;border-radius:10px;background:#686868}
.layers{flex:1;min-height:0}
.lrow{display:flex;align-items:center;height:56px;border-bottom:2px solid #434343;padding-left:7px;flex:none}
.filter{height:65px;padding-top:7px}
.off select{background:#4f4f4f;border-color:#606060;color:#8c8c8c;height:36px;padding-left:14px}
.kind{width:176px}
.kind select{padding-left:42px}
.kind .lead{right:auto;left:18px}
.ficons{display:flex;gap:24px;padding-left:24px}
.toggle{width:20px;height:36px;border:2px solid #5c5c5c;border-radius:10px;background:#4b4b4b;margin-left:23px;align-items:flex-start}
.toggle i{width:16px;height:16px;border-radius:50%;background:#999;flex:none}
.blend{padding-bottom:1px}
.blend .select{width:262px}
.blend label{width:92px;padding-left:7px}
.combo{display:flex;width:103px;height:36px;border:2px solid #606060;border-radius:6px}
.combo input{width:72px;border:0;border-right:2px solid #606060;background:none;color:#707070;padding:0 6px}
.combo button{flex:1}
.lock{height:59px;padding-bottom:3px}
.lock>.dim:first-child{padding-left:3px;width:65px}
.lock-icons{display:flex;gap:16px;flex:1}
.lock label{padding-right:7px}
.lock .combo{margin-right:104px}
.list{flex:1;background:#4d4d4d}
.layer{height:68px;border-bottom:2px solid #454545;margin-right:30px;display:flex;background:#535353}
.eye{width:60px}
.layer-main{flex:1;background:#6a6a6a;border-left:2px solid #454545;display:flex;align-items:center;padding:0 33px 0 6px}
.thumb{width:64px;height:48px;border:2px solid #333;background:#fff;margin-right:16px}
.lname{flex:1;color:#f0f0f0}
.lfoot{height:50px;border-top:2px solid #3d3d3d;display:flex;align-items:center;gap:24px;padding:0 0 3px 161px;flex:none}
.lfoot button{position:relative;width:30px}
.fx{font-style:italic;font-weight:400;font-size:24px;color:#8a8a8a}
.lfoot .more::after,.lfoot .fx::after{right:-6px;bottom:-6px}
.lfoot .more::after{border-top-color:#fff}
```
